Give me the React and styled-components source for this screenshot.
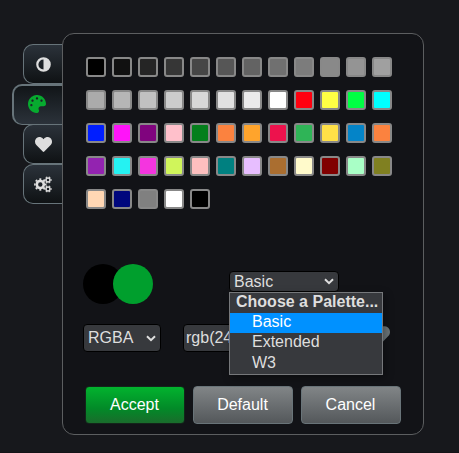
import React from "react";
import styled, { createGlobalStyle } from "styled-components";
import { FaPalette, FaHeart } from "react-icons/fa";

const Global = createGlobalStyle`
  *, *::before, *::after { box-sizing: border-box; }
  body {
    margin: 0;
    background: #17181c;
    font-family: "Liberation Sans", Arial, sans-serif;
    font-size: 16px;
    color: #dedede;
    overflow: hidden;
  }
`;

const Picker = styled.main`
  display: flex;
  align-items: flex-start;
  width: 459px;
  height: 453px;
  padding-top: 33px;
  border-bottom: 1px solid #141317;
`;

const Tabs = styled.nav`
  display: flex;
  flex-direction: column;
  align-items: flex-end;
  width: 62px;
  padding-top: 11px;
`;

const Tab = styled.button`
  display: flex;
  align-items: center;
  justify-content: center;
  width: ${(p) => (p.$active ? 50 : 39)}px;
  height: ${(p) => (p.$active ? 41 : 40)}px;
  margin: 0 0 ${(p) => (p.$active ? -1 : 0)}px;
  padding: ${(p) => (p.$active ? "0 3px 3px 0" : "0")};
  color: ${(p) => (p.$active ? "#07aa2f" : "#dedede")};
  font-size: ${(p) => p.$icon}px;
  background: ${(p) =>
    p.$active
      ? "linear-gradient(#111518, #2b323a)"
      : "linear-gradient(#2b323a, #0f1214)"};
  border: 1px solid #67747a;
  border-width: ${(p) => (p.$active ? "2px 0 1px 2px" : "1px 0 1px 1px")};
  border-radius: 10px 0 0 10px;
`;

const Panel = styled.section`
  width: 362px;
  height: 402px;
  padding: 23px 22px 0 20px;
  background: #121317;
  border: 1px solid #5c5e60;
  border-radius: 12px;
`;

const Swatches = styled.div`
  display: grid;
  grid-template-columns: repeat(12, 20px);
  grid-auto-rows: 20px;
  gap: 13px 6px;
  height: 207px;
  align-content: start;
  padding-left: 3px;
`;

const Swatch = styled.button`
  padding: 0;
  border: 2px solid #888;
  border-radius: 3px;
  background: ${(p) => p.$color};
`;

const Row = styled.div`
  display: flex;
  align-items: flex-start;
`;

const PreviewRow = styled(Row)`
  height: 60px;
`;

const Preview = styled.span`
  width: 40px;
  height: 40px;
  border-radius: 50%;
  background: ${(p) => p.$color};
  & + & {
    margin-left: -10px;
  }
`;

const PaletteMenu = styled.div`
  position: relative;
  margin: 7px 0 0 76px;
`;

const Field = styled.div`
  display: flex;
  align-items: center;
  justify-content: space-between;
  width: ${(p) => p.$w}px;
  height: ${(p) => p.$h}px;
  padding: 0 4px 0 ${(p) => p.$pad || 4}px;
  overflow: hidden;
  white-space: nowrap;
  color: #dedede;
  background: #37393d;
  border: 1px solid #000;
  border-radius: 4px;
`;

const Arrow = styled.svg`
  width: 10px;
  height: 7px;
  fill: none;
  stroke: #dedede;
  stroke-width: 2;
`;

const Options = styled.div`
  position: absolute;
  z-index: 1;
  top: 21px;
  left: 0;
  width: 154px;
  height: 83px;
  background: #37393d;
  border: 1px solid #76787b;
  box-shadow: 2px 3px 8px rgba(0, 0, 0, 0.35);
  line-height: 18px;
`;

const GroupTitle = styled.div`
  height: 20px;
  padding-left: 6px;
  font-weight: bold;
  white-space: nowrap;
`;

const Option = styled.div`
  height: ${(p) => (p.$selected ? 20 : 20.5)}px;
  padding-left: 22px;
  color: ${(p) => (p.$selected ? "#fff" : "#dedede")};
  background: ${(p) => (p.$selected ? "#0091ff" : "transparent")};
`;

const ValueRow = styled(Row)`
  height: 62px;
`;

const ValueField = styled.div`
  margin-left: 22px;
`;

const Favorite = styled(FaHeart)`
  width: 21px;
  height: 21px;
  margin: 1px 0 0 6px;
  color: #6d7679;
`;

const Actions = styled(Row)`
  align-items: center;
  gap: 8px;
  padding-left: 2px;
`;

const Action = styled.button`
  width: 100px;
  height: 38px;
  padding: 0 1px 1px 0;
  color: #fff;
  font: inherit;
  background: ${(p) =>
    p.$primary
      ? "linear-gradient(#02b32e, #028a28 60%, #1a6c2c)"
      : "linear-gradient(#818587, #54585b)"};
  border: 1px solid ${(p) => (p.$primary ? "#13251a" : "#697479")};
  border-radius: 4px;
`;

const COLORS = [
  "#000000", "#111111", "#252525", "#363636", "#464646", "#565656",
  "#636363", "#707070", "#7c7c7c", "#898989", "#949494", "#a0a0a0",
  "#ababab", "#b6b6b6", "#c1c1c1", "#cccccc", "#d7d7d7", "#e1e1e1",
  "#ebebeb", "#ffffff", "#ff000f", "#ffff44", "#00ff44", "#00ffff",
  "#001eff", "#ff14f9", "#80047e", "#ffc0cb", "#047f1c", "#fb823f",
  "#ffa42c", "#ed124d", "#2fb457", "#ffe047", "#0484c8", "#fb823f",
  "#9323b0", "#25f2f2", "#f435df", "#d0f55b", "#fdbfbf", "#008080",
  "#e7beff", "#aa6e30", "#fffacb", "#800000", "#a9ffc6", "#808021",
  "#ffd7b4", "#00077d", "#808080", "#ffffff", "#000000",
];

const ContrastIcon = () => (
  <svg width="15" height="15" viewBox="0 0 15 15" aria-hidden="true">
    <circle cx="7.5" cy="7.5" r="6.2" fill="none" stroke="currentColor" strokeWidth="2.2" />
    <path d="M7.5 1.5a6 6 0 0 1 0 12z" fill="currentColor" />
  </svg>
);

const Gear = ({ cx, cy, r, width, teeth, tooth }) => (
  <g fill="none" stroke="currentColor">
    <circle cx={cx} cy={cy} r={r} strokeWidth={width} />
    <circle
      cx={cx}
      cy={cy}
      r={r + width / 2 + tooth / 2 - 0.2}
      strokeWidth={tooth}
      pathLength={teeth * 2}
      strokeDasharray="1 1"
      strokeDashoffset="0.5"
    />
  </g>
);

const GearsIcon = () => (
  <svg width="18" height="17" viewBox="0 0 18 17" aria-hidden="true">
    <Gear cx={6.3} cy={8.5} r={3.5} width={2.6} teeth={8} tooth={1.6} />
    <Gear cx={14} cy={4} r={2} width={1.5} teeth={6} tooth={1.1} />
    <Gear cx={14} cy={13} r={2} width={1.5} teeth={6} tooth={1.1} />
  </svg>
);

const TABS = [
  { name: "Contrast", Icon: ContrastIcon, size: 15 },
  { name: "Palette", Icon: FaPalette, size: 18, active: true },
  { name: "Favorites", Icon: FaHeart, size: 17 },
  { name: "Settings", Icon: GearsIcon, size: 18 },
];

const Chevron = () => (
  <Arrow viewBox="0 0 10 7" aria-hidden="true">
    <path d="M1 1.2 5 5.2 9 1.2" />
  </Arrow>
);

export default function App() {
  return (
    <>
      <Global />
      <Picker>
        <Tabs>
          {TABS.map(({ name, Icon, size, active }) => (
            <Tab key={name} aria-label={name} $active={active} $icon={size}>
              <Icon />
            </Tab>
          ))}
        </Tabs>
        <Panel>
          <Swatches>
            {COLORS.map((color, i) => (
              <Swatch key={i} aria-label={color} $color={color} />
            ))}
          </Swatches>
          <PreviewRow>
            <Preview $color="#000" />
            <Preview $color="#009f2d" />
            <PaletteMenu>
              <Field $w={110} $h={21}>
                Basic
                <Chevron />
              </Field>
              <Options>
                <GroupTitle>Choose a Palette...</GroupTitle>
                <Option $selected>Basic</Option>
                <Option>Extended</Option>
                <Option>W3</Option>
              </Options>
            </PaletteMenu>
          </PreviewRow>
          <ValueRow>
            <Field $w={78} $h={28}>
              RGBA
              <Chevron />
            </Field>
            <ValueField>
              <Field $w={180} $h={28} $pad={2}>
                rgb(24
              </Field>
            </ValueField>
            <Favorite />
          </ValueRow>
          <Actions>
            <Action $primary>Accept</Action>
            <Action>Default</Action>
            <Action>Cancel</Action>
          </Actions>
        </Panel>
      </Picker>
    </>
  );
}
